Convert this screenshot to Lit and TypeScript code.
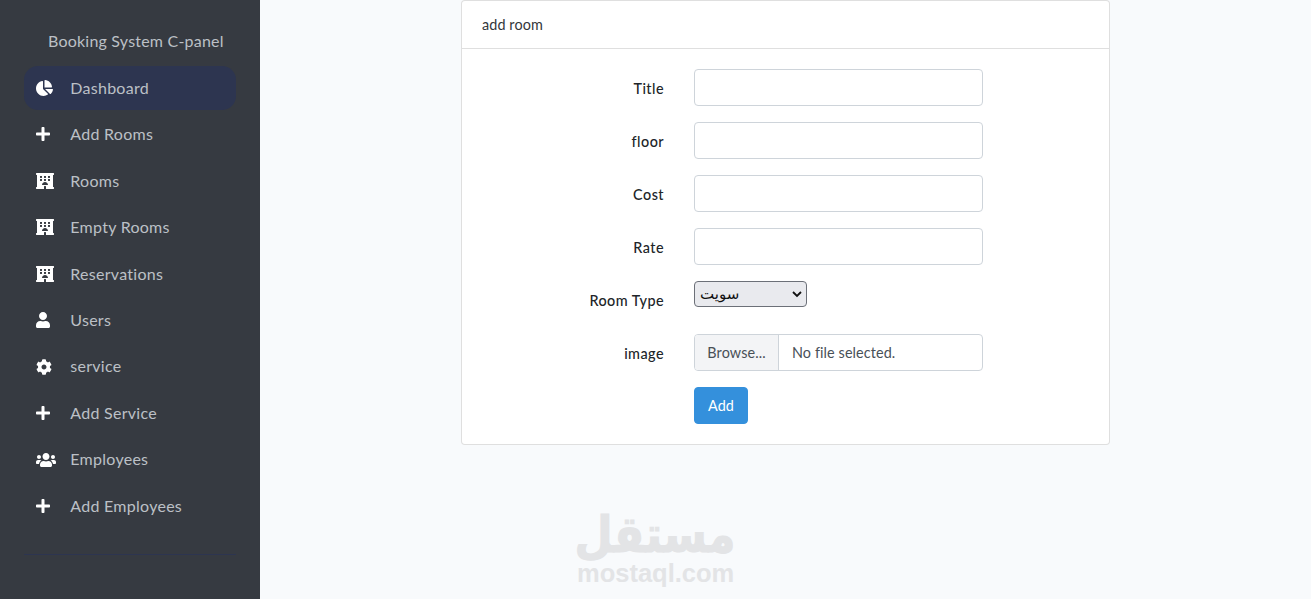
import { LitElement, html, css, svg } from "lit";
import { customElement } from "lit/decorators.js";

const P: Record<string, [number, string]> = {
  pie: [544, "M527.79 288H290.5l158.03 158.03c6.04 6.04 15.98 6.53 22.19.68 38.7-36.46 65.32-85.61 73.13-140.86 1.34-9.46-6.51-17.85-16.06-17.85zm-15.83-64.8C503.72 103.74 408.26 8.28 288.8.04 279.68-.59 272 7.1 272 16.24V240h223.77c9.14 0 16.82-7.68 16.19-16.8zM224 288V50.71c0-9.55-8.39-17.4-17.84-16.06C86.99 51.49-4.1 155.6.14 280.37 4.5 408.51 114.83 513.59 243.03 511.98c50.4-.63 96.97-16.87 135.26-44.03 7.9-5.6 8.42-17.23 1.57-24.08L224 288z"],
  plus: [448, "M416 208H272V64c0-17.67-14.33-32-32-32h-32c-17.67 0-32 14.33-32 32v144H32c-17.67 0-32 14.33-32 32v32c0 17.67 14.33 32 32 32h144v144c0 17.67 14.33 32 32 32h32c17.67 0 32-14.33 32-32V304h144c17.67 0 32-14.33 32-32v-32c0-17.67-14.33-32-32-32z"],
  hotel: [576, "M560 64c8.84 0 16-7.16 16-16V16c0-8.84-7.16-16-16-16H16C7.16 0 0 7.16 0 16v32c0 8.84 7.16 16 16 16h15.98v384H16c-8.84 0-16 7.16-16 16v32c0 8.84 7.16 16 16 16h240v-80c0-8.8 7.2-16 16-16h32c8.8 0 16 7.2 16 16v80h240c8.84 0 16-7.16 16-16v-32c0-8.84-7.16-16-16-16h-16V64h16zm-304 44.8c0-6.4 6.4-12.8 12.8-12.8h38.4c6.4 0 12.8 6.4 12.8 12.8v38.4c0 6.4-6.4 12.8-12.8 12.8h-38.4c-6.4 0-12.8-6.4-12.8-12.8v-38.4zm0 96c0-6.4 6.4-12.8 12.8-12.8h38.4c6.4 0 12.8 6.4 12.8 12.8v38.4c0 6.4-6.4 12.8-12.8 12.8h-38.4c-6.4 0-12.8-6.4-12.8-12.8v-38.4zm-128-96c0-6.4 6.4-12.8 12.8-12.8h38.4c6.4 0 12.8 6.4 12.8 12.8v38.4c0 6.4-6.4 12.8-12.8 12.8h-38.4c-6.4 0-12.8-6.4-12.8-12.8v-38.4zM179.2 256h-38.4c-6.4 0-12.8-6.4-12.8-12.8v-38.4c0-6.4 6.4-12.8 12.8-12.8h38.4c6.4 0 12.8 6.4 12.8 12.8v38.4c0 6.4-6.4 12.8-12.8 12.8zM192 384c0-53.02 42.98-96 96-96s96 42.98 96 96H192zm256-140.8c0 6.4-6.4 12.8-12.8 12.8h-38.4c-6.4 0-12.8-6.4-12.8-12.8v-38.4c0-6.4 6.4-12.8 12.8-12.8h38.4c6.4 0 12.8 6.4 12.8 12.8v38.4zm0-96c0 6.4-6.4 12.8-12.8 12.8h-38.4c-6.4 0-12.8-6.4-12.8-12.8v-38.4c0-6.4 6.4-12.8 12.8-12.8h38.4c6.4 0 12.8 6.4 12.8 12.8v38.4z"],
  user: [448, "M224 256c70.7 0 128-57.3 128-128S294.7 0 224 0 96 57.3 96 128s57.3 128 128 128zm89.6 32h-16.7c-22.2 10.2-46.9 16-72.9 16s-50.6-5.8-72.9-16h-16.7C60.2 288 0 348.2 0 422.4V464c0 26.5 21.5 48 48 48h352c26.5 0 48-21.5 48-48v-41.6c0-74.2-60.2-134.4-134.4-134.4z"],
  cog: [512, "M487.4 315.7l-42.6-24.6c4.3-23.2 4.3-47 0-70.2l42.6-24.6c4.9-2.8 7.1-8.6 5.5-14-11.1-35.6-30-67.8-54.7-94.6-3.8-4.1-10-5.1-14.8-2.3L380.8 110c-17.9-15.4-38.5-27.3-60.8-35.1V25.8c0-5.6-3.9-10.5-9.4-11.7-36.7-8.2-74.3-7.8-109.2 0-5.5 1.2-9.4 6.1-9.4 11.7V75c-22.2 7.9-42.8 19.8-60.8 35.1L88.7 85.5c-4.9-2.8-11-1.9-14.8 2.3-24.7 26.7-43.6 58.9-54.7 94.6-1.7 5.4.6 11.2 5.5 14L67.3 221c-4.3 23.2-4.3 47 0 70.2l-42.6 24.6c-4.9 2.8-7.1 8.6-5.5 14 11.1 35.6 30 67.8 54.7 94.6 3.8 4.1 10 5.1 14.8 2.3l42.6-24.6c17.9 15.4 38.5 27.3 60.8 35.1v49.2c0 5.6 3.9 10.5 9.4 11.7 36.7 8.2 74.3 7.8 109.2 0 5.5-1.2 9.4-6.1 9.4-11.7v-49.2c22.2-7.9 42.8-19.8 60.8-35.1l42.6 24.6c4.9 2.8 11 1.9 14.8-2.3 24.7-26.7 43.6-58.9 54.7-94.6 1.5-5.5-.7-11.3-5.6-14.1zM256 336c-44.1 0-80-35.9-80-80s35.9-80 80-80 80 35.9 80 80-35.9 80-80 80z"],
  users: [640, "M96 224c35.3 0 64-28.7 64-64s-28.7-64-64-64-64 28.7-64 64 28.7 64 64 64zm448 0c35.3 0 64-28.7 64-64s-28.7-64-64-64-64 28.7-64 64 28.7 64 64 64zm32 32h-64c-17.6 0-33.5 7.1-45.1 18.6 40.3 22.1 68.9 62 75.1 109.4h66c17.7 0 32-14.3 32-32v-32c0-35.3-28.7-64-64-64zm-256 0c61.9 0 112-50.1 112-112S381.9 32 320 32 208 82.1 208 144s50.1 112 112 112zm76.8 32h-8.3c-20.8 10-43.9 16-68.5 16s-47.6-6-68.5-16h-8.3C179.6 288 128 339.6 128 403.2V432c0 26.5 21.5 48 48 48h288c26.5 0 48-21.5 48-48v-28.8c0-63.6-51.6-115.2-115.2-115.2zm-223.7-13.4C161.5 263.1 145.6 256 128 256H64c-35.3 0-64 28.7-64 64v32c0 17.7 14.3 32 32 32h65.9c6.3-47.4 34.9-87.3 75.2-109.4z"],
};

const icon = (k: string) => {
  const [w, d] = P[k];
  return html`<svg class="ico" viewBox="0 0 ${w} 512" style="width:${w / 32}px">${svg`<path fill="currentColor" d=${d}></path>`}</svg>`;
};

const NAV: [string, string][] = [
  ["pie", "Dashboard"], ["plus", "Add Rooms"], ["hotel", "Rooms"], ["hotel", "Empty Rooms"], ["hotel", "Reservations"],
  ["user", "Users"], ["cog", "service"], ["plus", "Add Service"], ["users", "Employees"], ["plus", "Add Employees"],
];

@customElement("app-root")
export class AppRoot extends LitElement {
  static styles = css`
    :host { display: flex; height: 100vh; min-height: 599px; overflow: hidden; background: #f8fafc;
      font-family: "Lato", "Open Sans", sans-serif; color: #212529; font-size: 14.4px; position: relative; }
    .side { width: 260px; flex: none; background: #363a41; padding: 29px 24px 0; box-sizing: border-box; }
    .brand { height: 24px; line-height: 24px; padding-left: 24px; margin-bottom: 13px; color: #bcc0c6; font-size: 16px; letter-spacing: .21px; white-space: nowrap; }
    nav { display: grid; gap: 2.44px; }
    .item { height: 44px; display: flex; align-items: center; padding-left: 12px; border-radius: 14px; color: #bcc0c6; font-size: 16px; letter-spacing: .27px; }
    .item span:last-child { position: relative; top: -0.7px; }
    .item.active { background: #2d3550; }
    .ib { width: 34.3px; flex: none; display: flex; color: #fff; }
    .ico { height: 16px; display: block; }
    .rule { height: 1px; background: #2d3550; margin-top: 26px; }
    main { flex: 1; min-width: 0; }
    .card { width: 649px; margin: 0 auto; background: #fff; border: 1px solid rgba(0,0,0,.125); border-radius: 4px; box-sizing: border-box; }
    .head { height: 47px; line-height: 48px; padding-left: 20px; border-bottom: 1px solid rgba(0,0,0,.125); font-size: 14.4px; letter-spacing: .1px; color: #33373b; }
    form { display: grid; grid-template-columns: 202px 289px; column-gap: 30px; row-gap: 16px; padding: 20px 0; }
    label { height: 37px; line-height: 39px; text-align: right; font-size: 14.4px; font-weight: 500; letter-spacing: .45px; color: #212529; }
    input { height: 37px; box-sizing: border-box; border: 1px solid #ced4da; border-radius: 4px; background: #fff; display: block; width: 100%; padding: 0 12px; }
    .selwrap { position: relative; width: 113px; height: 26px; }
    select { appearance: none; width: 100%; height: 26px; border: 1px solid #6c7078; border-radius: 4px; background: #e9eaee; padding: 0 5px; color: #111; text-align: left; font: 400 15px "DejaVu Sans", sans-serif; }
    .chev { position: absolute; right: 5px; top: 9px; width: 10px; height: 8px; pointer-events: none; }
    .file { height: 37px; box-sizing: border-box; border: 1px solid #ced4da; border-radius: 4px; display: flex; align-items: stretch; color: #495057; font-size: 14.4px; letter-spacing: .1px; background: #fff; overflow: hidden; }
    .browse { width: 84px; box-sizing: border-box; flex: none; background: #f3f4f6; border-right: 1px solid #ced4da; display: flex; align-items: center; justify-content: center; white-space: nowrap; }
    .fname { padding-left: 13px; display: flex; align-items: center; }
    .btn { grid-column: 2; justify-self: start; width: 54px; height: 37px; border: 1px solid #3490dc; background: #3490dc; color: #fff; border-radius: 4px; font: inherit; padding: 0; letter-spacing: .1px; }
    .mark { position: absolute; left: 577px; top: 505px; width: 157px; color: #e3e4e6; pointer-events: none; }
    .ar { font: 700 44px/57px "DejaVu Sans", sans-serif; display: block; white-space: nowrap; -webkit-text-stroke: 1px #e3e4e6; transform: translate(-2.5px, 5px) scaleY(1.15); transform-origin: 50% 100%; }
    .en { font: 700 25.5px/26px "Liberation Sans", sans-serif; display: block; white-space: nowrap; margin-top: -2px; }
  `;

  render() {
    return html`
      <aside class="side">
        <div class="brand">Booking System C-panel</div>
        <nav>
          ${NAV.map(([i, t], n) => html`<div class="item ${n === 0 ? "active" : ""}"><span class="ib">${icon(i)}</span><span>${t}</span></div>`)}
        </nav>
        <div class="rule"></div>
      </aside>
      <main>
        <section class="card">
          <div class="head">add room</div>
          <form @submit=${(e: Event) => e.preventDefault()}>
            <label>Title</label><input type="text" />
            <label>floor</label><input type="text" />
            <label>Cost</label><input type="text" />
            <label>Rate</label><input type="text" />
            <label>Room Type</label>
            <div class="selwrap">
              <select><option>سويت</option></select>
              <svg class="chev" viewBox="0 0 10 8"><path d="M1 2l4 4 4-4" fill="none" stroke="#111" stroke-width="1.8"></path></svg>
            </div>
            <label>image</label>
            <div class="file"><span class="browse">Browse...</span><span class="fname">No file selected.</span></div>
            <button class="btn" type="submit">Add</button>
          </form>
        </section>
      </main>
      <div class="mark"><span class="ar">مستقل</span><span class="en">mostaql.com</span></div>
    `;
  }
}
